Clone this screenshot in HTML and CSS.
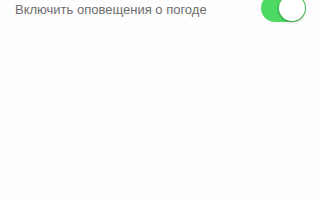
FILE: index.html
```html
<!DOCTYPE html>
<html lang="ru">
<head>
<meta charset="utf-8">
<link rel="stylesheet" href="styles.css">
</head>
<body>
<div class="row">
  <span class="label">Включить оповещения о погоде</span>
  <span class="toggle on"><span class="thumb"></span></span>
</div>
</body>
</html>
```
FILE: styles.css
```css
html, body {
  margin: 0;
  padding: 0;
  background: #fdfdfd;
  width: 320px;
  height: 200px;
  overflow: hidden;
}
.row {
  display: flex;
  align-items: center;
  justify-content: space-between;
  height: 28px;
  margin-top: -6px;
  padding: 0 14px 0 15px;
}
.label {
  font-family: "Liberation Sans", Arial, sans-serif;
  font-size: 13px;
  color: #6e6e6e;
  position: relative;
  top: 1px;
}
.toggle {
  display: flex;
  align-items: center;
  justify-content: flex-end;
  width: 45px;
  height: 28px;
  border-radius: 14px;
  background: #4cd964;
  box-sizing: border-box;
  padding: 1px;
}
.thumb {
  width: 26px;
  height: 26px;
  border-radius: 50%;
  background: #fff;
  box-shadow: 0 1px 3px rgba(0,0,0,0.35);
}
```
